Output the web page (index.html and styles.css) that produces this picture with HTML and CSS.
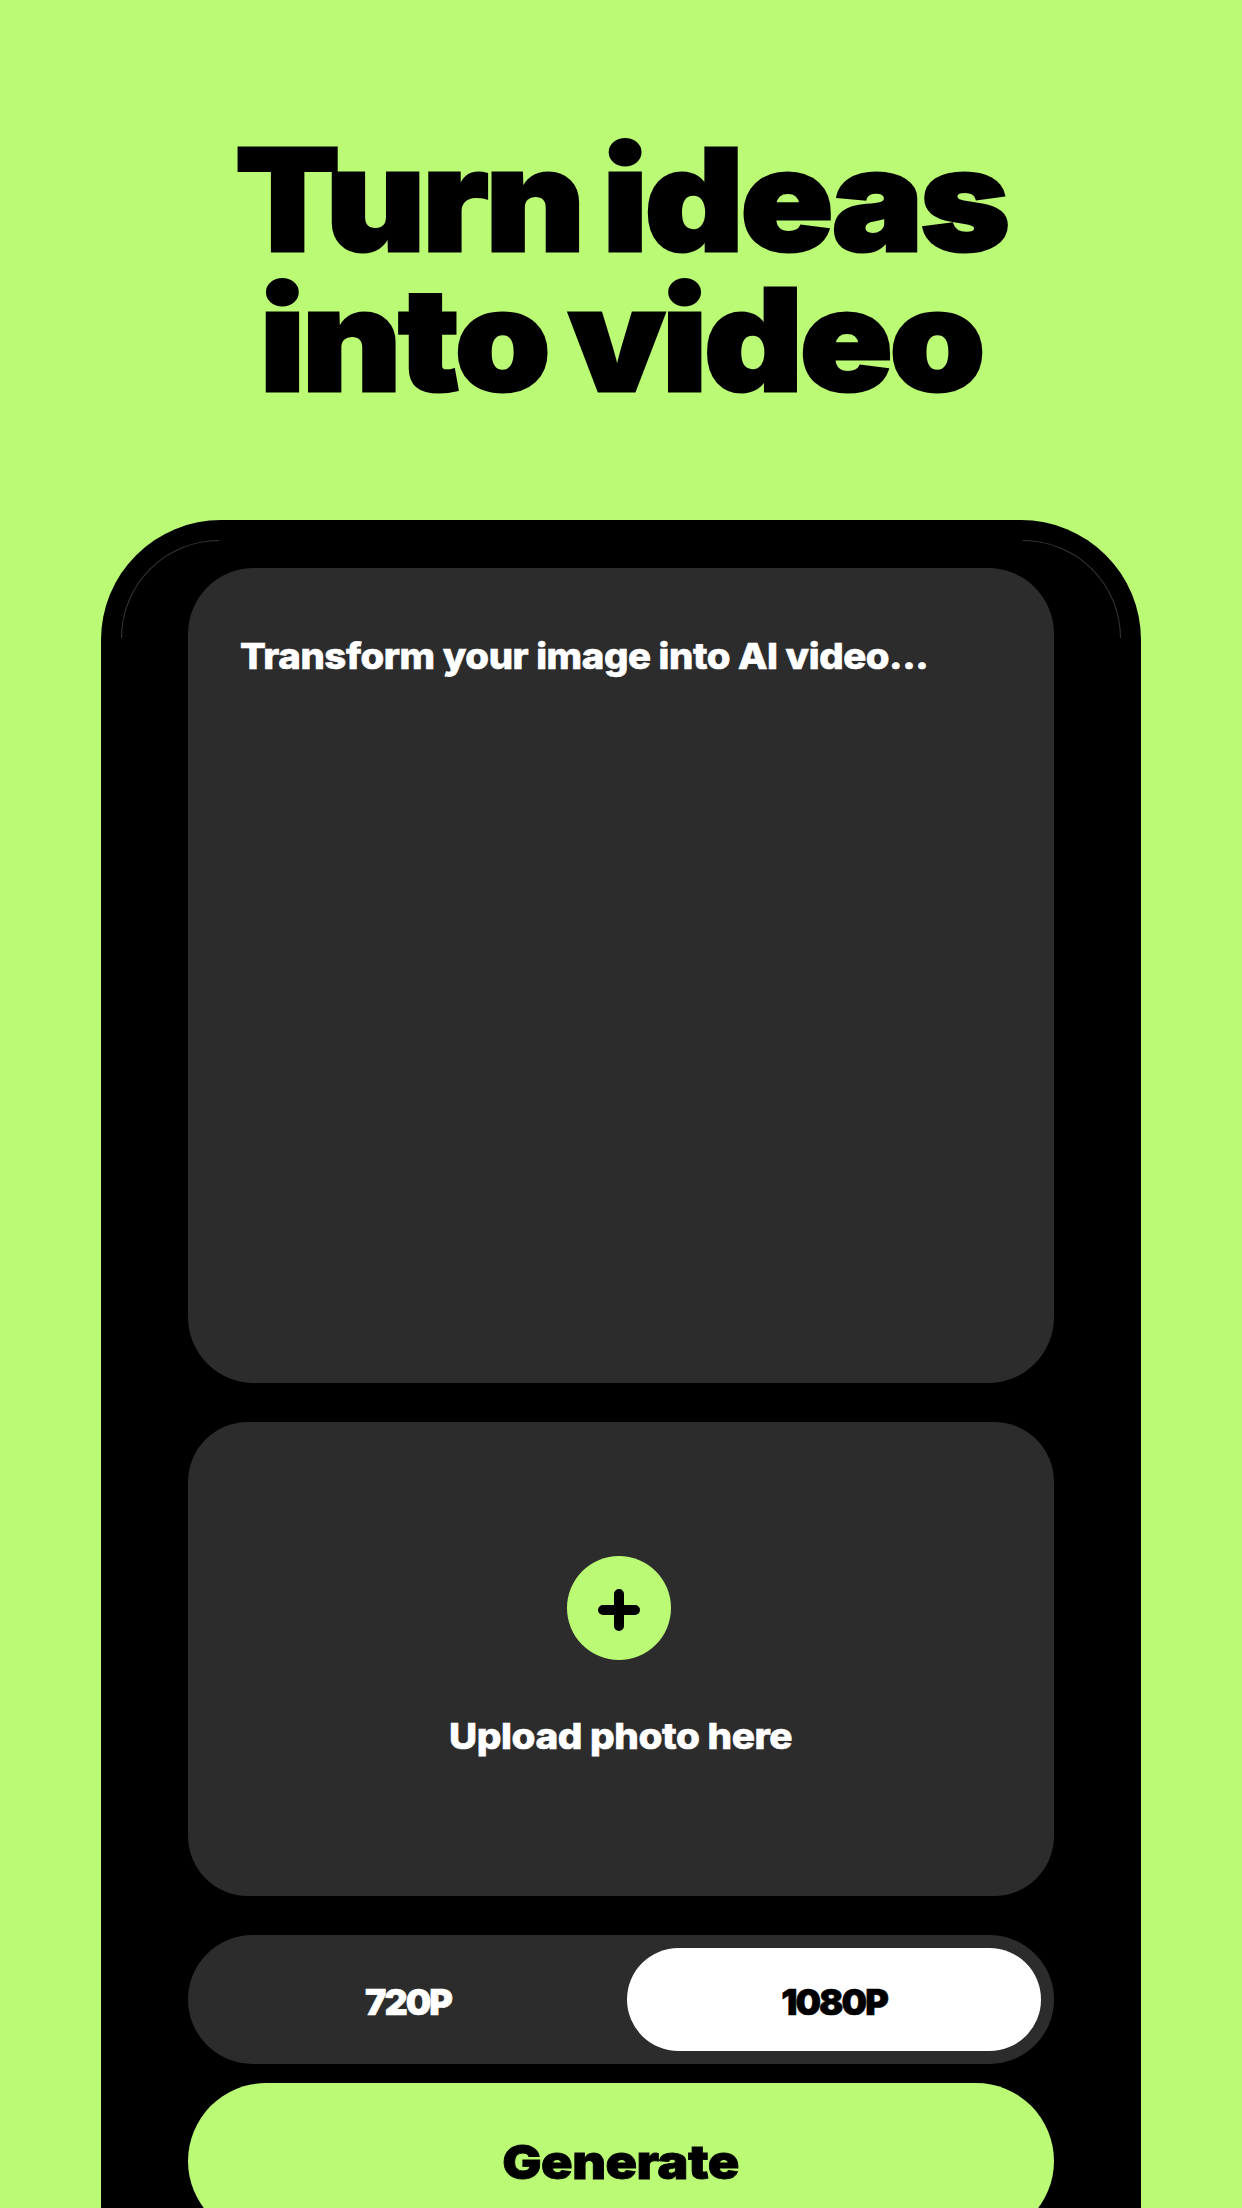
FILE: index.html
```html
<!DOCTYPE html>
<html lang="en">
<head>
<meta charset="utf-8">
<title>Turn ideas into video</title>
<link rel="stylesheet" href="styles.css">
</head>
<body>
<main class="page">
  <h1 class="headline">Turn ideas<br>into video</h1>
  <section class="phone">
    <span class="edge edge-left"></span>
    <span class="edge edge-right"></span>
    <div class="card prompt">
      <p class="prompt-text">Transform your image into AI video...</p>
    </div>
    <div class="card upload">
      <span class="plus">
        <svg viewBox="0 0 42 42" width="42" height="42" aria-hidden="true"><path d="M21 5V37M5 21H37" fill="none" stroke="#000" stroke-width="10" stroke-linecap="round"/></svg>
      </span>
      <p class="upload-text">Upload photo here</p>
    </div>
    <div class="toggle">
      <div class="option">720P</div>
      <div class="option active">1080P</div>
    </div>
    <button class="generate"><span class="generate-label">Generate</span></button>
  </section>
</main>
</body>
</html>
```
FILE: styles.css
```css
* { box-sizing: border-box; }
html, body { margin: 0; padding: 0; }
body { background: #bbfa74; font-family: "Inter", "Liberation Sans", sans-serif; }
.page { height: 2208px; overflow: hidden; padding-top: 129px; }
.headline {
  margin: 0 0 111px;
  text-align: center;
  font-size: 142px;
  line-height: 140px;
  font-weight: 900;
  letter-spacing: -3px;
  word-spacing: -6px;
  color: #000;
  -webkit-text-stroke: 3px #000;
  transform: scaleX(1.08);
}
.phone {
  position: relative;
  width: 1040px;
  height: 1800px;
  margin: 0 0 0 101px;
  padding: 48px 87px 0;
  background: #000;
  border-radius: 120px 120px 0 0;
}
.edge {
  position: absolute;
  top: 20px;
  width: 98px;
  height: 98px;
  border-top: 1px solid #363636;
}
.edge-left { left: 20px; border-left: 1px solid #363636; border-top-left-radius: 98px; }
.edge-right { right: 20px; border-right: 1px solid #363636; border-top-right-radius: 98px; }
.card { background: #2c2c2c; }
.prompt {
  height: 815px;
  margin-bottom: 39px;
  padding: 66px 52px 0;
  border-radius: 66px;
}
.prompt-text {
  margin: 0;
  font-size: 36px;
  line-height: 44px;
  font-weight: 800;
  letter-spacing: -0.4px;
  color: #fff;
  -webkit-text-stroke: 0.6px #fff;
  transform: scaleX(1.065);
  transform-origin: left center;
}
.upload {
  height: 474px;
  margin-bottom: 39px;
  padding-top: 134px;
  border-radius: 60px;
  display: flex;
  flex-direction: column;
  align-items: center;
}
.plus {
  width: 104px;
  height: 104px;
  margin-right: 5px;
  border-radius: 50%;
  background: #bbfa74;
  display: flex;
  align-items: center;
  justify-content: center;
}
.plus svg { margin-top: 3px; }
.upload-text {
  margin: 54px 0 0;
  font-size: 36px;
  line-height: 44px;
  font-weight: 800;
  letter-spacing: -0.4px;
  color: #fff;
  -webkit-text-stroke: 0.6px #fff;
  transform: scaleX(1.075);
}
.toggle {
  height: 129px;
  margin-bottom: 19px;
  padding: 13px;
  border-radius: 65px;
  background: #2c2c2c;
  display: flex;
}
.option {
  flex: 1;
  padding: 5px 12px 0 0;
  border-radius: 52px;
  display: flex;
  align-items: center;
  justify-content: center;
  font-size: 36px;
  font-weight: 900;
  letter-spacing: -2px;
  color: #fff;
  -webkit-text-stroke: 0.6px #fff;
}
.option.active {
  flex: 0 0 414px;
  padding-right: 0;
  background: #fff;
  color: #000;
  -webkit-text-stroke: 0.6px #000;
}
.generate {
  display: block;
  width: 100%;
  height: 156px;
  border: 0;
  border-radius: 78px;
  background: #bbfa74;
  color: #000;
  font-family: inherit;
  font-size: 47px;
  font-weight: 900;
  letter-spacing: -0.5px;
}
.generate-label {
  display: inline-block;
  -webkit-text-stroke: 0.8px #000;
  transform: scaleX(1.11);
}
```
